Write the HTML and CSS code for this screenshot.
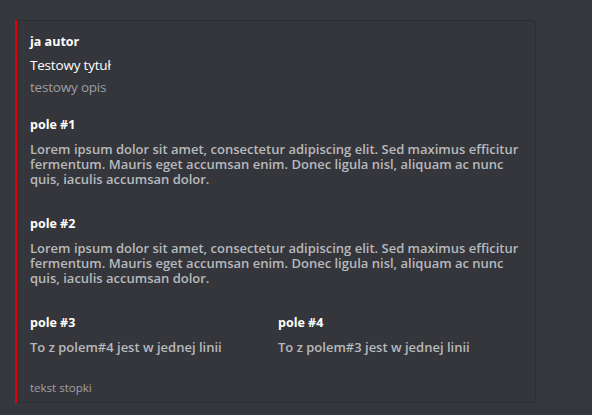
FILE: index.html
```html
<!DOCTYPE html>
<html lang="pl">
<head>
<meta charset="utf-8">
<title>Embed</title>
<link rel="stylesheet" href="styles.css">
</head>
<body>
<div class="embed">
  <div class="bar"></div>
  <div class="content">
    <div class="author">ja autor</div>
    <div class="title">Testowy tytuł</div>
    <div class="desc">testowy opis</div>
    <div class="fields">
      <div class="field full">
        <div class="fname">pole #1</div>
        <div class="fvalue">Lorem ipsum dolor sit amet, consectetur adipiscing elit. Sed maximus efficitur fermentum. Mauris eget accumsan enim. Donec ligula nisl, aliquam ac nunc quis, iaculis accumsan dolor.</div>
      </div>
      <div class="field full">
        <div class="fname">pole #2</div>
        <div class="fvalue">Lorem ipsum dolor sit amet, consectetur adipiscing elit. Sed maximus efficitur fermentum. Mauris eget accumsan enim. Donec ligula nisl, aliquam ac nunc quis, iaculis accumsan dolor.</div>
      </div>
      <div class="field">
        <div class="fname">pole #3</div>
        <div class="fvalue">To z polem#4 jest w jednej linii</div>
      </div>
      <div class="field">
        <div class="fname">pole #4</div>
        <div class="fvalue">To z polem#3 jest w jednej linii</div>
      </div>
    </div>
    <div class="footer">tekst stopki</div>
  </div>
</div>
</body>
</html>
```
FILE: styles.css
```css
html, body {
  margin: 0;
  padding: 0;
  background: #36373c;
  font-family: "Open Sans", "Noto Sans", sans-serif;
  -webkit-font-smoothing: antialiased;
}
body {
  padding: 20px 0 0 15px;
}
.embed {
  display: flex;
  width: 521px;
  height: 383px;
  box-sizing: border-box;
  background: #35363b;
  border: 1px solid #2d2e33;
  border-left: none;
  border-radius: 0 4px 4px 0;
}
.bar {
  width: 2px;
  flex: none;
  background: #e3020a;
  margin-top: -1px;
  margin-bottom: -1px;
}
.content {
  flex: 1;
  padding: 13px 10px 0 13px;
}
.author {
  font-size: 12.5px;
  font-weight: 700;
  line-height: 16px;
  color: #ffffff;
}
.title {
  margin-top: 7px;
  font-size: 13.5px;
  font-weight: 400;
  line-height: 16px;
  color: #ffffff;
  letter-spacing: -0.2px;
}
.desc {
  margin-top: 6px;
  font-size: 13.5px;
  line-height: 16px;
  color: #9c9ea3;
  letter-spacing: -0.2px;
}
.fields {
  display: grid;
  grid-template-columns: 248px 248px;
  margin-top: 22px;
}
.field.full {
  grid-column: 1 / span 2;
  margin-bottom: 29px;
}
.fname {
  font-size: 12.5px;
  font-weight: 700;
  line-height: 16px;
  color: #ffffff;
}
.fvalue {
  margin-top: 9px;
  font-size: 13px;
  font-weight: 600;
  line-height: 15px;
  color: #b7b9bd;
}
.footer {
  margin-top: 25px;
  font-size: 11.5px;
  line-height: 16px;
  color: #a0a2a6;
}
```
